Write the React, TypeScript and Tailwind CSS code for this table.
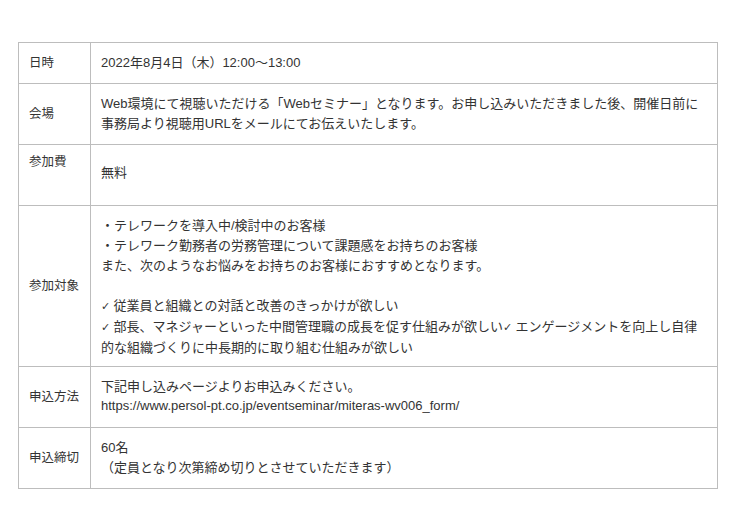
import * as React from "react";
import { clsx } from "clsx";

function Row({
  label,
  labelClass,
  contentClass,
  children,
}: {
  label: string;
  labelClass?: string;
  contentClass?: string;
  children: React.ReactNode;
}) {
  return (
    <div className="flex border-b border-[#bdbdbd]">
      <div
        className={clsx(
          "flex w-[72px] shrink-0 whitespace-nowrap border-r border-[#bdbdbd] px-[10px] text-[12.5px] leading-[20px]",
          labelClass ?? "items-center"
        )}
      >
        {label}
      </div>
      <div className={clsx("min-w-0 flex-1 px-[10px] leading-[20px]", contentClass)}>
        {children}
      </div>
    </div>
  );
}

function Check() {
  return (
    <span className="inline-block w-[9px] font-['DejaVu_Sans'] text-[11px]">✓</span>
  );
}

export default function App() {
  return (
    <div className="min-h-screen bg-white pt-[42px] pl-[18px] font-['Liberation_Sans','Noto_Sans_CJK_JP',sans-serif] text-[13px] text-[#333]">
      <div className="w-[700px] border-x border-t border-[#bdbdbd]">
        <Row label="日時" contentClass="h-[40px] py-[10px]">
          2022年8月4日（木）12:00〜13:00
        </Row>
        <Row label="会場" contentClass="h-[60px] py-[10px]">
          Web環境にて視聴いただける「Webセミナー」となります。お申し込みいただきました後、開催日前に事務局より視聴用URLをメールにてお伝えいたします。
        </Row>
        <Row label="参加費" labelClass="items-start pt-[7px]" contentClass="h-[60px] pt-[18px]">
          無料
        </Row>
        <Row label="参加対象" contentClass="h-[160px] py-[10px] whitespace-nowrap">
          <div>・テレワークを導入中/検討中のお客様</div>
          <div>・テレワーク勤務者の労務管理について課題感をお持ちのお客様</div>
          <div>また、次のようなお悩みをお持ちのお客様におすすめとなります。</div>
          <div className="h-[20px]" />
          <div>
            <Check /> 従業員と組織との対話と改善のきっかけが欲しい
          </div>
          <div>
            <Check /> 部長、マネジャーといった中間管理職の成長を促す仕組みが欲しい
            <Check /> エンゲージメントを向上し自律
          </div>
          <div>的な組織づくりに中長期的に取り組む仕組みが欲しい</div>
        </Row>
        <Row label="申込方法" contentClass="h-[60px] pt-[10px]">
          <div>下記申し込みページよりお申込みください。</div>
          <div className="leading-[17px]">
            https://www.persol-pt.co.jp/eventseminar/miteras-wv006_form/
          </div>
        </Row>
        <Row label="申込締切" contentClass="h-[60px] py-[10px]">
          <div>60名</div>
          <div>（定員となり次第締め切りとさせていただきます）</div>
        </Row>
      </div>
    </div>
  );
}
